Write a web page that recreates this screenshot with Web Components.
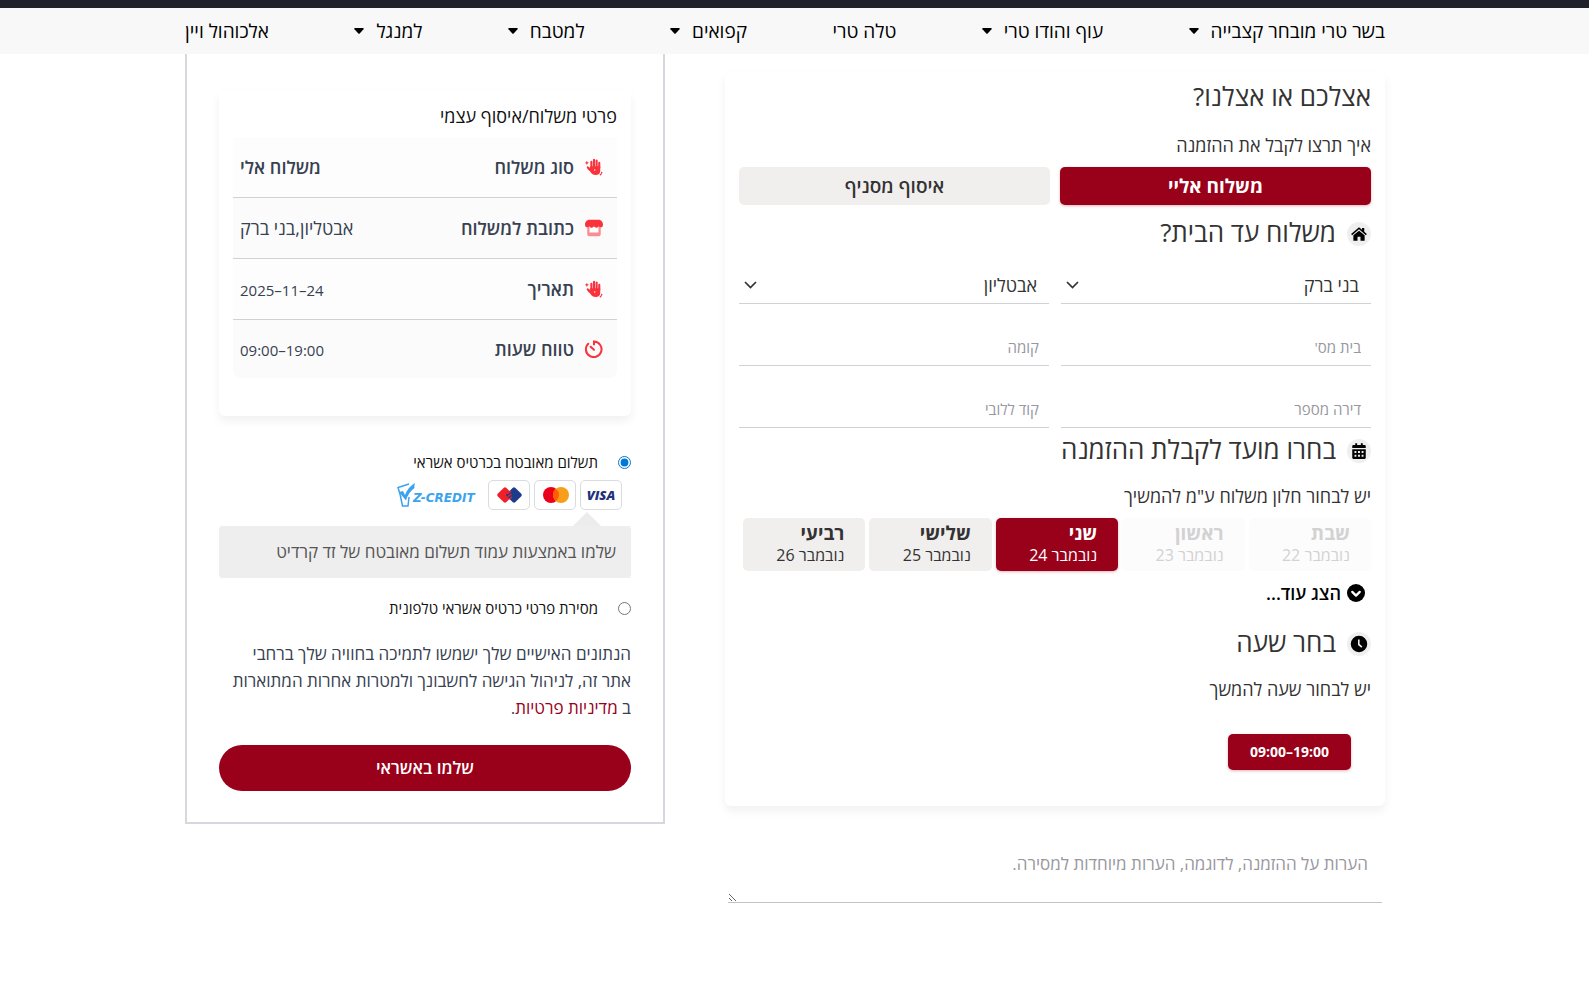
<!DOCTYPE html>
<html lang="he" dir="rtl">
<head>
<meta charset="utf-8">
<meta name="viewport" content="width=device-width, initial-scale=1">
<title>תשלום</title>
<style>
  body {
    margin: 0;
    background: #fff;
    color: #333;
    font-family: "Open Sans", "Liberation Sans", sans-serif;
    font-size: 18px;
    line-height: 24px;
    --brand: #99001a;
    --soft: #f0efee;
    --line: #d0d2d5;
  }
</style>
</head>
<body>
<checkout-page>
  <site-nav slot="nav">
    <nav-entry menu>בשר טרי מובחר קצבייה</nav-entry>
    <nav-entry menu>עוף והודו טרי</nav-entry>
    <nav-entry>טלה טרי</nav-entry>
    <nav-entry menu>קפואים</nav-entry>
    <nav-entry menu>למטבח</nav-entry>
    <nav-entry menu>למנגל</nav-entry>
    <nav-entry>אלכוהול ויין</nav-entry>
  </site-nav>
  <delivery-form slot="form"></delivery-form>
  <order-notes slot="form"></order-notes>
  <delivery-summary slot="order"></delivery-summary>
  <payment-methods slot="order"></payment-methods>
</checkout-page>

<script>
// Helper común: crea el shadow root y pinta el contenido
class BaseElement extends HTMLElement {
  connectedCallback() {
    if (!this.shadowRoot) this.attachShadow({ mode: 'open' });
    this.shadowRoot.innerHTML = this.render();
    this.setup();
  }

  setup() {}
}

const ICONS = {
  home: '<path d="M12 3 1.5 12l1.3 1.5L12 5.800l9.200 7.700 1.300-1.500-3.500-3V4h-3v2.400z"/><path d="M12 7.500 4.500 13.800V21H10v-5.500h4V21h5.500v-7.200z"/>',
  calendar: '<path fill-rule="evenodd" d="M7 1.500h2.500V4h5V1.500H17V4h2.500A1.500 1.500 0 0 1 21 5.500V8H3V5.500A1.500 1.500 0 0 1 4.500 4H7zM3 9.500h18V21a1.500 1.500 0 0 1-1.500 1.500h-15A1.500 1.500 0 0 1 3 21zM6 12v2.500h2.500V12zm4.700 0v2.500h2.600V12zm4.800 0v2.500H18V12zM6 17v2.500h2.500V17zm4.700 0v2.500h2.600V17zm4.800 0v2.500H18V17z"/>',
  clock: '<path fill-rule="evenodd" d="M12 1a11 11 0 1 0 0 22 11 11 0 0 0 0-22zm-1.300 5h2.100v6l3.700 3.300-1.400 1.700-4.400-3.800z"/>',
  more: '<circle cx="12" cy="12" r="12"/><path fill="none" stroke="#fff" stroke-width="3" stroke-linecap="round" stroke-linejoin="round" d="m7 10.500 5 5 5-5"/>',
  hand: '<path stroke="currentColor" stroke-width="2.800" stroke-linecap="round" fill="none" d="M8.500 13V5M12 12V2.500M15.500 12V3.500M19 13V6.500M6 15.500l-2.300-3"/><path d="M7 11h13.300v6.500c0 3-2.500 5-6 5-3.300 0-5.500-1.200-7-4L4.800 15z"/><path d="m2.500 3.500.9 2 2 .9-2 .9-.9 2-.9-2-2-.9 2-.9zM22 17.500l.6 1.600 1.400.7-1.400.6-.6 1.600-1.700 1.500-1-1.300 1.800-1.500z"/><circle cx="13" cy="16" r=".9" fill="#fff"/>',
  store: '<path d="M3 10h18v9.500a3.500 3.500 0 0 1-3.500 3.500h-11A3.500 3.500 0 0 1 3 19.500z" opacity=".55"/><path fill="#fff" d="M6 10h12v8H6z"/><path d="M6 1h12c3.500 0 6 3 6 6.500 0 2-1.300 3.500-3 3.500-1.300 0-2.300-.5-3-1.500-.7 1.500-2 2-3 2s-2.300-.5-3-1.800c-.7 1.300-2 1.800-3 1.800s-2.300-.5-3-2c-.7 1-1.700 1.500-3 1.500-1.700 0-3-1.500-3-3.500C0 4 2.500 1 6 1z"/>',
  timer: '<g fill="none" stroke="currentColor" stroke-width="2.700" stroke-linecap="round"><path d="M12 6V2a10.400 10.400 0 1 1-7.700 3"/><path d="m7.500 9 4.500 4"/></g>',
};

function icon(name, size) {
  return `<svg viewBox="0 0 24 24" width="${size}" height="${size}" fill="currentColor" aria-hidden="true">${ICONS[name]}</svg>`;
}

class CheckoutPage extends BaseElement {
  render() {
    return `
      <style>
        :host { display: block; }
        header {
          border-top: 8px solid #1f222b;
          background: #f8f8f8;
        }
        /* el desplazamiento deja sitio a la barra de scroll */
        .wrap { padding-inline-start: 19px; }
        .inner {
          max-width: 1200px;
          margin: 0 auto;
        }
        main.inner {
          display: grid;
          grid-template-columns: 55% 40%;
          justify-content: space-between;
          align-items: start;
        }
        .order {
          border: 2px solid #d5d8dc;
          border-top: 0;
          padding: 36px 32px 31px;
        }
      </style>
      <header><div class="wrap"><div class="inner"><slot name="nav"></slot></div></div></header>
      <div class="wrap">
        <main class="inner">
          <div><slot name="form"></slot></div>
          <section class="order"><slot name="order"></slot></section>
        </main>
      </div>
    `;
  }
}

class SiteNav extends BaseElement {
  render() {
    return `
      <style>
        :host { display: block; }
        nav {
          display: flex;
          justify-content: space-between;
          align-items: center;
          height: 46px;
        }
      </style>
      <nav><slot></slot></nav>
    `;
  }
}

class NavEntry extends BaseElement {
  render() {
    return `
      <style>
        :host { display: block; }
        a {
          display: flex;
          align-items: center;
          gap: 12px;
          color: #000;
          font-size: 19px;
          text-decoration: none;
          white-space: nowrap;
        }
      </style>
      <a href="#"><slot></slot>${this.hasAttribute('menu')
        ? '<svg width="10" height="6" viewBox="0 0 10 6" aria-hidden="true"><path d="M1 0h8q1.200.2.500 1.200L5.700 5.500q-.7.700-1.400 0L.5 1.200Q-.2.200 1 0z"/></svg>'
        : ''}</a>
    `;
  }
}

class PanelCard extends BaseElement {
  render() {
    return `
      <style>
        :host {
          display: block;
          border-radius: 6px;
          background: #fff;
          box-shadow: 0 5px 10px rgba(0, 0, 0, 0.06);
        }
      </style>
      <slot></slot>
    `;
  }
}

class SectionTitle extends BaseElement {
  render() {
    const name = this.getAttribute('icon');
    return `
      <style>
        :host { display: block; }
        h2 {
          display: flex;
          align-items: center;
          gap: 11px;
          margin: 0;
          font-size: 26px;
          font-weight: 400;
          line-height: 32px;
        }
        span {
          display: grid;
          place-items: center;
          width: 24px;
          height: 24px;
          margin-top: 3px;
          border-radius: 50%;
          background: #efefef;
          color: #000;
        }
      </style>
      <h2>${name ? `<span>${icon(name, 18)}</span>` : ''}<slot></slot></h2>
    `;
  }
}

class FormField extends BaseElement {
  render() {
    const label = this.getAttribute('label');
    const value = this.getAttribute('value');
    return `
      <style>
        :host { display: block; min-width: 0; }
        .box { display: grid; align-items: center; }
        .box > * { grid-area: 1 / 1; }
        select, input {
          box-sizing: border-box;
          width: 100%;
          height: 38px;
          margin: 0;
          padding: 0 12px;
          border: 0;
          border-bottom: 1px solid var(--line);
          border-radius: 0;
          background: transparent;
          color: #333;
          font: inherit;
          appearance: none;
          outline-color: var(--brand);
        }
        input { padding: 0 10px; font-size: 15px; }
        input::placeholder { color: #98989e; opacity: 1; }
        svg {
          justify-self: end;
          margin-inline-end: 5px;
          pointer-events: none;
        }
      </style>
      <div class="box">
        ${value
          ? `<select aria-label="${label}"><option>${value}</option></select>
             <svg width="13" height="8" viewBox="0 0 13 8" fill="none" stroke="#333" stroke-width="1.700"><path d="m1 1 5.500 5.500L12 1"/></svg>`
          : `<input type="text" aria-label="${label}" placeholder="${label}">`}
      </div>
    `;
  }
}

class DeliveryForm extends BaseElement {
  render() {
    const days = [
      ['שבת', 'נובמבר 22', 'disabled'],
      ['ראשון', 'נובמבר 23', 'disabled'],
      ['שני', 'נובמבר 24', 'aria-pressed="true"'],
      ['שלישי', 'נובמבר 25', ''],
      ['רביעי', 'נובמבר 26', ''],
    ];
    return `
      <style>
        :host { display: block; margin-top: 18px; }
        panel-card { padding: 8px 14px 36px; }
        p { margin: 19px 0 10px; }
        .lead { margin-bottom: 21px; }
        button {
          border: 0;
          border-radius: 5px;
          background: var(--soft);
          color: #333;
          font: inherit;
          cursor: pointer;
        }
        button[aria-pressed="true"] {
          background: var(--brand);
          color: #fff;
          box-shadow: 0 1px 3px rgba(153, 0, 26, 0.3);
        }
        .modes {
          display: grid;
          grid-template-columns: 1fr 1fr;
          gap: 10px;
          margin-bottom: 11px;
        }
        .modes button {
          height: 38px;
          padding: 0;
          font-size: 19px;
          font-weight: 600;
        }
        .modes button[aria-pressed="true"] { font-weight: 700; }
        .fields {
          display: grid;
          grid-template-columns: 1fr 1fr;
          gap: 24px 12px;
          margin: 18px 0 5px;
        }
        .days {
          display: grid;
          grid-template-columns: repeat(5, 1fr);
          gap: 4px;
          padding-inline-end: 4px;
        }
        .days button {
          padding: 4px 21px 5px;
          font-size: 16px;
          line-height: 22px;
          text-align: start;
        }
        .days strong {
          display: block;
          font-size: 19px;
          font-weight: 700;
        }
        .days button:disabled {
          background: #fcfcfc;
          color: #d2d2d2;
          cursor: default;
        }
        .more {
          display: flex;
          align-items: center;
          gap: 6px;
          margin: 10px 6px 21px;
          padding: 0;
          background: none;
          color: #000;
          font-weight: 600;
        }
        .time {
          display: block;
          height: 36px;
          margin: 33px 20px 0;
          padding: 0 22px;
          font-size: 14px;
          font-weight: 700;
        }
      </style>
      <panel-card>
        <section-title class="lead">אצלכם או אצלנו?</section-title>
        <p>איך תרצו לקבל את ההזמנה</p>
        <div class="modes">
          <button type="button" aria-pressed="true">משלוח אליי</button>
          <button type="button">איסוף מסניף</button>
        </div>
        <section-title icon="home">משלוח עד הבית?</section-title>
        <div class="fields">
          <form-field label="עיר" value="בני ברק"></form-field>
          <form-field label="רחוב" value="אבטליון"></form-field>
          <form-field label="בית מס'"></form-field>
          <form-field label="קומה"></form-field>
          <form-field label="דירה מספר"></form-field>
          <form-field label="קוד ללובי"></form-field>
        </div>
        <section-title icon="calendar">בחרו מועד לקבלת ההזמנה</section-title>
        <p>יש לבחור חלון משלוח ע"מ להמשיך</p>
        <div class="days">
          ${days.map(([name, date, state]) => `<button type="button" ${state}><strong>${name}</strong>${date}</button>`).join('')}
        </div>
        <button type="button" class="more">${icon('more', 18)}הצג עוד...</button>
        <section-title icon="clock">בחר שעה</section-title>
        <p>יש לבחור שעה להמשך</p>
        <button type="button" class="time" aria-pressed="true" dir="ltr">09:00–19:00</button>
      </panel-card>
    `;
  }

  setup() {
    // Un solo botón activo en cada grupo
    this.shadowRoot.querySelectorAll('.modes, .days').forEach(group => {
      group.addEventListener('click', (e) => {
        const button = e.target.closest('button');
        if (!button) return;
        group.querySelectorAll('button').forEach(b => b.removeAttribute('aria-pressed'));
        button.setAttribute('aria-pressed', 'true');
      });
    });
  }
}

class OrderNotes extends BaseElement {
  render() {
    return `
      <style>
        :host { display: block; margin: 34px 3px 0; }
        textarea {
          display: block;
          box-sizing: border-box;
          width: 100%;
          height: 63px;
          padding: 12px 14px;
          border: 0;
          border-bottom: 1px solid #c4c4c8;
          background: transparent;
          font: inherit;
          font-size: 17px;
          resize: vertical;
          outline-color: var(--brand);
        }
        textarea::placeholder { color: #98989e; opacity: 1; }
      </style>
      <textarea aria-label="הערות להזמנה" placeholder="הערות על ההזמנה, לדוגמה, הערות מיוחדות למסירה."></textarea>
    `;
  }
}

class DeliverySummary extends BaseElement {
  render() {
    const rows = [
      ['hand', 'סוג משלוח', '<b>משלוח אלי</b>'],
      ['store', 'כתובת למשלוח', 'אבטליון,בני ברק'],
      ['hand', 'תאריך', '<bdi class="num">2025–11–24</bdi>'],
      ['timer', 'טווח שעות', '<bdi class="num" dir="ltr">09:00–19:00</bdi>'],
    ];
    return `
      <style>
        :host { display: block; }
        panel-card { padding: 14px 14px 38px; }
        h3 {
          margin: 0 0 9px;
          color: #111;
          font-size: 18px;
          font-weight: 400;
        }
        table {
          width: 100%;
          border-collapse: separate;
          border-spacing: 0;
          background: #fbfbfb;
          border-radius: 8px;
          color: #374151;
        }
        tr:nth-child(odd) { background: #fdfdfd; }
        tr:last-child { background: none; }
        th, td {
          height: 60px;
          padding: 0;
          border-bottom: 1px solid var(--line);
        }
        tr:last-child > * { height: 58px; border-bottom: 0; }
        th { padding-inline-start: 14px; font-weight: 600; text-align: start; }
        td { padding-inline-end: 7px; text-align: end; }
        b { font-weight: 600; }
        .num { font-size: 15px; }
        .name { display: flex; align-items: center; gap: 11px; }
        svg { color: #f9323c; }
      </style>
      <panel-card>
        <h3>פרטי משלוח/איסוף עצמי</h3>
        <table>
          ${rows.map(([name, label, value]) => `
            <tr><th scope="row"><div class="name">${icon(name, 18)}${label}</div></th><td>${value}</td></tr>
          `).join('')}
        </table>
      </panel-card>
    `;
  }
}

class CardLogo extends BaseElement {
  render() {
    const logos = {
      visa: '<text x="20" y="19" text-anchor="middle" font-size="13" font-weight="800" font-style="italic" fill="#24307c">VISA</text>',
      mastercard: '<circle cx="16" cy="14" r="8" fill="#eb001b"/><circle cx="26" cy="14" r="8" fill="#f79e1b"/><path fill="#ff5f00" d="M21 7.750a8 8 0 0 1 0 12.500 8 8 0 0 1 0-12.500z"/>',
      isracard: '<rect x="-6" y="-6" width="12" height="12" rx="2" transform="translate(16 14) rotate(45)" fill="#f0202a"/><rect x="-6" y="-6" width="12" height="12" rx="2" transform="translate(25 14) rotate(45)" fill="#1d3b8b"/><path fill="none" stroke="#f0202a" stroke-width="1.500" d="m18 13 4-3M18.500 16l4-3M20 18l3-2"/>',
    };
    return `
      <style>
        :host {
          display: block;
          box-sizing: border-box;
          width: 42px;
          height: 30px;
          border: 1px solid #d9dbdf;
          border-radius: 5px;
          background: #fff;
        }
        svg { display: block; }
      </style>
      <svg viewBox="0 0 40 28" width="40" height="28" direction="ltr" role="img">${logos[this.getAttribute('brand')]}</svg>
    `;
  }
}

class PaymentMethods extends BaseElement {
  render() {
    return `
      <style>
        :host { display: block; margin-top: 34px; }
        .option {
          display: flex;
          align-items: center;
          gap: 20px;
          color: #111;
          font-size: 15px;
        }
        input { width: 13px; height: 13px; margin: 0; accent-color: #0078d4; }
        .logos {
          display: flex;
          align-items: center;
          gap: 4px;
          margin: 6px 9px 0;
        }
        .zcredit { margin-right: 6px; }
        .arrow {
          width: 0;
          margin: 2px 30px 0;
          border: 14px solid transparent;
          border-top: 0;
          border-bottom-color: #ececec;
        }
        .info {
          margin-bottom: 18px;
          padding: 14px 15px;
          border-radius: 3px;
          background: #eee;
          color: #555;
          font-size: 17px;
        }
        p {
          margin: 20px 0 24px;
          color: #374151;
          font-size: 17px;
          line-height: 27px;
        }
        a { color: var(--brand); text-decoration: none; }
        button {
          width: 100%;
          height: 46px;
          border: 0;
          border-radius: 23px;
          background: var(--brand);
          color: #fff;
          font: inherit;
          font-size: 17px;
          font-weight: 600;
          cursor: pointer;
        }
      </style>
      <div class="option"><input type="radio" name="pay" id="card" checked><label for="card">תשלום מאובטח בכרטיס אשראי</label></div>
      <div class="logos">
        <card-logo brand="visa"></card-logo>
        <card-logo brand="mastercard"></card-logo>
        <card-logo brand="isracard"></card-logo>
        <svg class="zcredit" width="82" height="26" viewBox="0 0 82 26" direction="ltr" role="img">
          <g fill="none" stroke="#3ba3ee" stroke-width="1.500"><path d="M13 2 2 5.500l3 10M4 12l2.500 12H12l1-9"/></g>
          <path fill="#3ba3ee" d="m3 10 4-1 2 4q3-8 10-12-1 3-.5 5-6 4-8.500 12.500z"/>
          <text x="17" y="20" font-family="DejaVu Sans, sans-serif" font-size="12" font-weight="700" font-style="italic" fill="#3ba3ee">Z-CREDIT</text>
        </svg>
      </div>
      <div class="arrow"></div>
      <div class="info">שלמו באמצעות עמוד תשלום מאובטח של זד קרדיט</div>
      <div class="option"><input type="radio" name="pay" id="phone"><label for="phone">מסירת פרטי כרטיס אשראי טלפונית</label></div>
      <p>הנתונים האישיים שלך ישמשו לתמיכה בחוויה שלך ברחבי<br>אתר זה, לניהול הגישה לחשבונך ולמטרות אחרות המתוארות<br>ב <a href="#">מדיניות פרטיות</a>.</p>
      <button type="submit">שלמו באשראי</button>
    `;
  }
}

customElements.define('checkout-page', CheckoutPage);
customElements.define('site-nav', SiteNav);
customElements.define('nav-entry', NavEntry);
customElements.define('panel-card', PanelCard);
customElements.define('section-title', SectionTitle);
customElements.define('form-field', FormField);
customElements.define('delivery-form', DeliveryForm);
customElements.define('order-notes', OrderNotes);
customElements.define('delivery-summary', DeliverySummary);
customElements.define('card-logo', CardLogo);
customElements.define('payment-methods', PaymentMethods);
</script>
</body>
</html>
